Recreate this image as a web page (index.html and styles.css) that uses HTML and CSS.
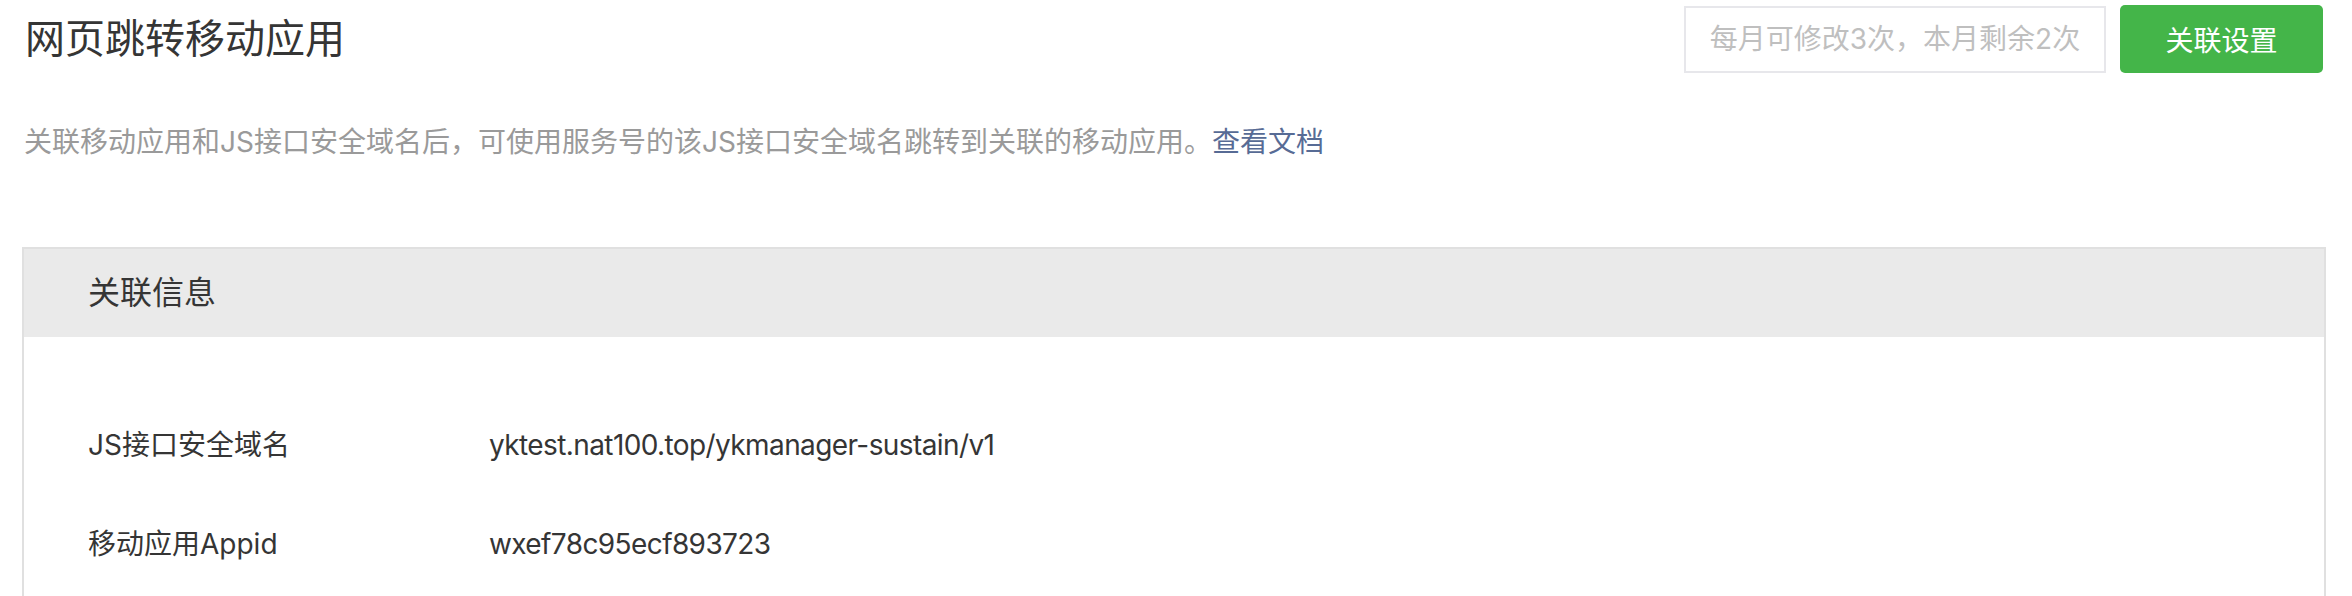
FILE: index.html
```html
<!DOCTYPE html>
<html lang="zh-CN">
<head>
  <meta charset="UTF-8">
  <title>网页跳转移动应用</title>
  <link rel="stylesheet" href="styles.css">
</head>
<body>

  <div class="page">
    <div class="page-hd">
      <h2 class="page-title">网页跳转移动应用</h2>
      <div class="page-ops">
        <span class="quota">每月可修改3次，本月剩余2次</span>
        <button class="btn-primary">关联设置</button>
      </div>
    </div>

    <p class="page-desc">关联移动应用和JS接口安全域名后，可使用服务号的该JS接口安全域名跳转到关联的移动应用。<a href="#">查看文档</a></p>

    <div class="panel">
      <div class="panel-hd">关联信息</div>
      <div class="panel-bd">
        <div class="info-row">
          <span class="info-label">JS接口安全域名</span>
          <span class="info-value">yktest.nat100.top/ykmanager-sustain/v1</span>
        </div>
        <div class="info-row">
          <span class="info-label">移动应用Appid</span>
          <span class="info-value">wxef78c95ecf893723</span>
        </div>
      </div>
    </div>
  </div>

</body>
</html>
```

FILE: styles.css
```css
body {
  margin: 0;
  font-family: Inter, "Noto Sans CJK SC", sans-serif;
  color: #353535;
  background: #fff;
}
.page {
  padding: 5px 26px 0 22px;
}
.page-hd {
  display: flex;
  justify-content: space-between;
  align-items: center;
  height: 68px;
}
.page-title {
  margin: 0;
  padding-left: 3px;
  font-size: 40px;
  font-weight: normal;
  line-height: 68px;
}
.page-ops {
  display: flex;
  align-items: center;
  gap: 14px;
  margin-right: 3px;
}
.quota {
  box-sizing: border-box;
  width: 422px;
  height: 67px;
  line-height: 63px;
  border: 2px solid #e7e7eb;
  text-align: center;
  font-size: 28px;
  color: #bfbfbf;
}
.btn-primary {
  box-sizing: border-box;
  width: 203px;
  height: 68px;
  padding: 0;
  border: none;
  border-radius: 5px;
  background-color: #44b549;
  color: #fff;
  font-family: inherit;
  font-size: 28px;
  cursor: pointer;
}
.page-desc {
  margin: 49px 0 85px;
  padding-left: 2px;
  font-size: 28px;
  line-height: 40px;
  color: #9a9a9a;
}
.page-desc a {
  color: #576b95;
  text-decoration: none;
}
.panel {
  border: 2px solid #e0e0e0;
  border-bottom: none;
}
.panel-hd {
  height: 88px;
  line-height: 88px;
  padding-left: 64px;
  background: #eaeaea;
  font-size: 32px;
}
.panel-bd {
  padding: 88px 64px 40px;
  display: flex;
  flex-direction: column;
  gap: 59px;
}
.info-row {
  display: flex;
  font-size: 28px;
  line-height: 40px;
}
.info-label {
  width: 401px;
  flex-shrink: 0;
}
.info-value {
  letter-spacing: -0.6px;
}
```
